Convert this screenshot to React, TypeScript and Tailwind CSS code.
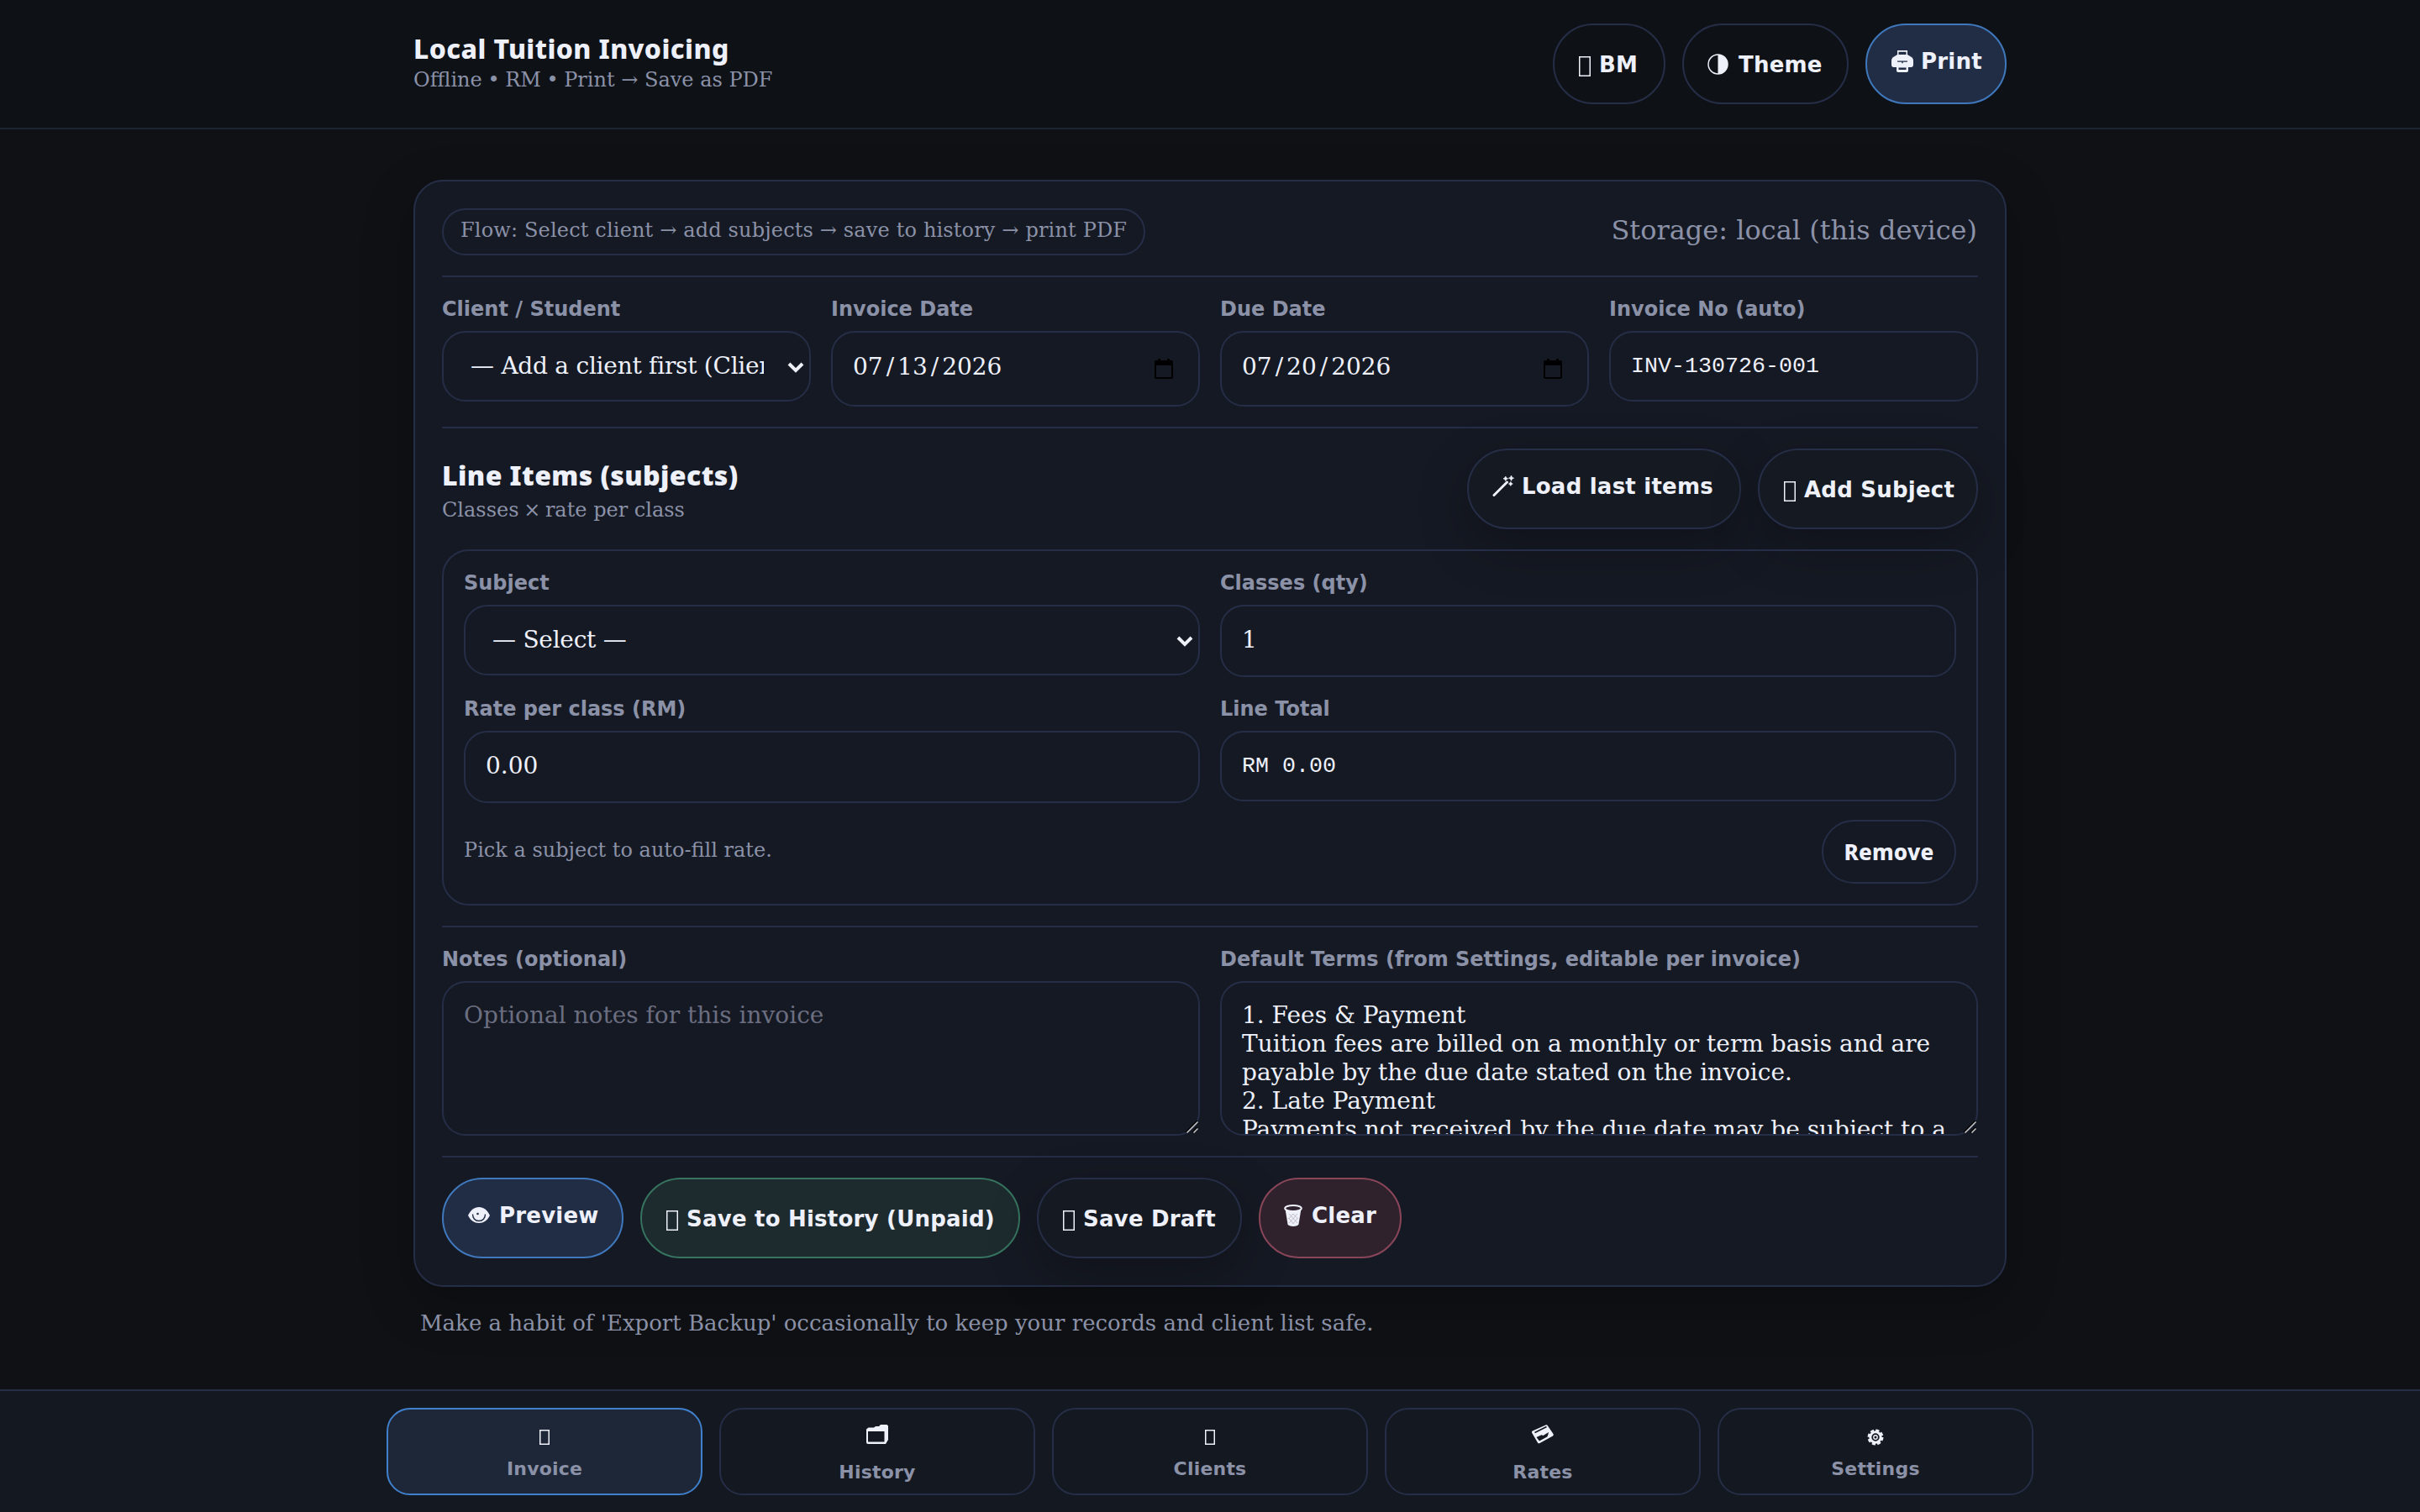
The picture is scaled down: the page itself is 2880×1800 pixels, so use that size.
import { useState } from "react";
import type { ReactNode } from "react";

const TERMS = `1. Fees & Payment
Tuition fees are billed on a monthly or term basis and are payable by the due date stated on the invoice.
2. Late Payment
Payments not received by the due date may be subject to a late fee.`;

const control =
  "block w-full rounded-[28px] border-2 border-[#262e47] bg-[#151923] px-6 text-[28px] text-[#eef0fa] outline-none";

const tones = {
  plain: "border-[#262e47]",
  shadow: "border-[#262e47] bg-[#151921] shadow-[0_20px_60px_rgba(0,0,0,0.25)]",
  primary: "border-[#4078be] bg-[#202d44]",
  good: "border-[#36745f] bg-[#1d2a2e]",
  danger: "border-[#8a4659] bg-[#2f222d]",
};

// Empty glyph box
function BoxIcon() {
  return (
    <svg className="mt-1.5 mr-[10px] ml-px h-6 w-[14px]" viewBox="0 0 14 24" fill="none" stroke="#eef0fa" strokeWidth="1.5">
      <path d="M.75.75h12.5v22.5H.75z" />
    </svg>
  );
}

function ThemeIcon() {
  return (
    <svg className="mr-3 h-[25px] w-[25px]" viewBox="0 0 25 25">
      <circle cx="12.5" cy="12.5" r="11.5" fill="none" stroke="#eef0fa" strokeWidth="1.5" />
      <path d="M12.5 1a11.5 11.5 0 0 1 0 23z" fill="#eef0fa" />
    </svg>
  );
}

function PrintIcon() {
  return (
    <svg className="mr-[9px] ml-px h-[26px] w-[26px]" viewBox="0 0 26 26" fill="#eef0fa">
      <path
        fillRule="evenodd"
        d="M7 0h12v5l4 2.500c2 1 3 2.500 3 5V17c0 2-1 3-2.500 3H20v4c0 1.300-.7 2-2 2H8c-1.300 0-2-.7-2-2v-4H2.500C1 20 0 19 0 17v-4.500c0-2.500 1-4 3-5L7 5zM8.500 1.800V5h9V1.800zM7 12.500v1.200h5.300v1.500h1.400v-1.500H19v-1.200zM8.500 20.500V23h9v-2.500z"
      />
    </svg>
  );
}

function WandIcon() {
  return (
    <svg className="mr-[9px] h-[25px] w-[26px]" viewBox="0 0 26 25" fill="#eef0fa">
      <path d="M2 23.500L17.500 8" stroke="#eef0fa" strokeWidth="3" strokeLinecap="round" />
      <path
        d="M15.800 1l1 1.800 1.800 1-1.800 1-1 1.800-1-1.800-1.800-1 1.800-1zM22.500 0l1 2.200 2.200 1-2.200 1-1 2.200-1-2.200-2.200-1 2.200-1zM21.800 7.500l.9 1.600 1.600.9-1.600.9-.9 1.600-.9-1.600-1.600-.9 1.600-.9z"
        stroke="#eef0fa"
        strokeWidth=".6"
      />
    </svg>
  );
}

function EyeIcon() {
  return (
    <svg className="mr-[11px] ml-px h-[19px] w-[26px]" viewBox="0 0 26 19">
      <path d="M0 10C3 3.500 7.500 0 13 0s10 3.500 13 10c-3 6-7.500 9-13 9S3 16 0 10z" fill="#eef0fa" />
      <path d="M5.500 8.500c0 4.500 2.800 8 7.500 8s7.500-3.500 7.500-8" fill="none" stroke="#202d44" strokeWidth="1.400" />
      <circle cx="11.500" cy="8" r="1.300" fill="#202d44" />
    </svg>
  );
}

function TrashIcon() {
  return (
    <svg className="mr-[11px] h-[26px] w-[22px]" viewBox="0 0 22 26">
      <path d="M1.500 5l3 18.500C5 25 8 26 11 26s6-1 6.500-2.500l3-18.500z" fill="#eef0fa" />
      <ellipse cx="11" cy="4.500" rx="9.800" ry="3.500" fill="#2f222d" stroke="#eef0fa" strokeWidth="2" />
      <path
        d="M6 11l10 11M11 11l5.500 6M5.500 16l6 7M16 11L6 22M11 11l-5.500 6M16.500 16l-6 7"
        stroke="#a89fa9"
        strokeWidth=".6"
      />
    </svg>
  );
}

type PillProps = { tone: keyof typeof tones; width: string; icon: ReactNode; label: string; raised?: boolean };

function PillButton({ tone, width, icon, label, raised }: PillProps) {
  return (
    <button
      className={`flex h-24 items-center rounded-full border-2 pl-7 font-['DejaVu_Sans'] text-[26px] font-bold tracking-[0.22px] whitespace-nowrap text-[#eef0fa] ${width} ${
        raised ? "pb-[7px]" : ""
      } ${tones[tone]}`}
    >
      {icon}
      <span className="pt-0.5">{label}</span>
    </button>
  );
}

function Field({ label, children }: { label: string; children: ReactNode }) {
  return (
    <label className="flex min-w-0 flex-col">
      <span className="h-10 font-['DejaVu_Sans'] text-[24px] leading-7 font-bold text-[#8b91a7]">{label}</span>
      {children}
    </label>
  );
}

function SelectBox({ option }: { option: string }) {
  return (
    <div className="relative">
      <select className={`${control} h-[84px] appearance-none pr-[54px] pl-8 tracking-[-0.25px]`}>
        <option>{option}</option>
      </select>
      <svg className="absolute top-9 right-2 h-4 w-5" viewBox="0 0 20 16" fill="none" stroke="#eef0fa" strokeWidth="4">
        <path d="M2 3l8 8 8-8" />
      </svg>
    </div>
  );
}

function DateBox({ value }: { value: string }) {
  const [month, day, year] = value.split("/");
  return (
    <div className={`${control} flex h-[90px] items-center justify-between pr-[30px]`}>
      <span className="pb-1">
        {month}
        <span className="mx-1">/</span>
        {day}
        <span className="mx-1">/</span>
        {year}
      </span>
      <svg className="h-6 w-[22px]" viewBox="0 0 22 24" fill="#000">
        <path d="M4 0h3v2h8V0h3v2h2a2 2 0 0 1 2 2v18a2 2 0 0 1-2 2H2a2 2 0 0 1-2-2V4a2 2 0 0 1 2-2h2zM2 8v14h18V8z" />
      </svg>
    </div>
  );
}

function MonoBox({ value }: { value: string }) {
  return (
    <input
      className={`${control} h-[84px] font-['Liberation_Mono'] text-[26.67px]!`}
      defaultValue={value}
      readOnly
    />
  );
}

function TextBox({ value, placeholder }: { value?: string; placeholder?: string }) {
  return (
    <div className="relative">
      <textarea
        className={`${control} h-[184px] resize-none overflow-hidden py-[22px] leading-[34px] placeholder:text-[#6b6e80]`}
        defaultValue={value}
        placeholder={placeholder}
      />
      <svg className="absolute right-0.5 bottom-[3px] h-4 w-4" viewBox="0 0 16 16">
        <path d="M1 15L15 1M9 15l6-6" stroke="#000" strokeWidth="1.500" />
        <path d="M2.500 15.500l13-13M10.500 15.500l5-5" stroke="#c8c8c8" strokeWidth="1.500" />
      </svg>
    </div>
  );
}

function Divider() {
  return <div className="my-6 h-0.5 bg-[#262e47]" />;
}

function SmallBox() {
  return (
    <svg className="h-[18px] w-3" viewBox="0 0 12 18" fill="none" stroke="#eef0fa" strokeWidth="1.500">
      <path d="M.75.75h10.500v16.500H.75z" />
    </svg>
  );
}

function FolderIcon() {
  return (
    <svg className="h-[23px] w-[26px]" viewBox="0 0 26 23">
      <path d="M0 7V5.500L2.500 3.500H9L11 2h4l2-2h7.500L26 1.500V18l-3 5H2a2 2 0 0 1-2-2z" fill="#eef0fa" />
      <path d="M2 8h19.500v12.500H2z" fill="#141820" />
    </svg>
  );
}

function CardIcon() {
  return (
    <svg className="h-[23px] w-[26px]" viewBox="0 0 26 23">
      <path
        d="M.8 7.500L16.500.5c1-.4 2 0 2.500 1l6.500 9.500c.5 1 .3 2-.5 2.500L9.500 22c-1 .6-2 .4-2.500-.5L.3 10c-.5-1-.5-2 .5-2.500z"
        fill="#eef0fa"
      />
      <path d="M3.500 9.500l14-7" stroke="#141820" strokeWidth="1.600" />
      <path d="M5.500 15l6-2.800 2 .8 6.500-4-.8 3.500-1 2L9 19.500z" fill="#141820" />
    </svg>
  );
}

function GearIcon() {
  return (
    <svg className="h-5 w-5" viewBox="0 0 20 20" fill="none" stroke="#eef0fa">
      <circle cx="10" cy="10" r="8.300" strokeWidth="2.400" strokeDasharray="4.200 2.319" />
      <circle cx="10" cy="10" r="6.200" strokeWidth="3" />
      <circle cx="10" cy="10" r="2.200" strokeWidth="1.400" />
    </svg>
  );
}

const tabs = [
  { icon: <SmallBox />, label: "Invoice" },
  { icon: <FolderIcon />, label: "History", tall: true },
  { icon: <SmallBox />, label: "Clients" },
  { icon: <CardIcon />, label: "Rates", tall: true },
  { icon: <GearIcon />, label: "Settings" },
];

export default function App() {
  const [active, setActive] = useState("Invoice");

  return (
    <div className="flex h-[1800px] w-[2880px] flex-col overflow-hidden bg-[#0f1115] font-['DejaVu_Serif'] text-[#eef0fa]">
      <header className="h-[154px] shrink-0 border-b-2 border-[#1c2333] bg-[#0e1217]">
        <div className="mx-auto flex h-full w-[1896px] items-center justify-between">
          <div>
            <h1 className="-mt-1 mb-1 font-['Noto_Sans'] text-[32px] leading-[38px] font-extrabold tracking-[0.4px]">
              Local Tuition Invoicing
            </h1>
            <p className="text-[24px] leading-7 text-[#8b91a7]">
              Offline <span className="-mx-px">•</span> RM <span className="-mx-px">•</span> Print → Save as PDF
            </p>
          </div>
          <div className="flex gap-5">
            <PillButton tone="plain" width="w-[134px]" icon={<BoxIcon />} label="BM" />
            <PillButton tone="plain" width="w-[198px]" icon={<ThemeIcon />} label="Theme" />
            <PillButton tone="primary" width="w-[168px]" icon={<PrintIcon />} label="Print" raised />
          </div>
        </div>
      </header>

      <main className="mx-auto w-[1896px] flex-1 pt-[60px]">
        <section className="rounded-[36px] border-2 border-[#262e47] bg-[#151923] p-8 shadow-[0_20px_60px_rgba(0,0,0,0.25)]">
          <div className="flex items-center justify-between">
            <div className="flex h-14 items-center rounded-full border-2 border-[#262e47] px-5 pb-1 text-[24px] tracking-[0.16px] text-[#8b91a7]">
              Flow: Select client → add subjects → save to history → print PDF
            </div>
            <span className="pr-px pb-[5px] text-[32px] text-[#8b91a7]">Storage: local (this device)</span>
          </div>

          <Divider />

          <div className="grid grid-cols-4 items-start gap-6">
            <Field label="Client / Student">
              <SelectBox option="— Add a client first (Clients tab) —" />
            </Field>
            <Field label="Invoice Date">
              <DateBox value="07/13/2026" />
            </Field>
            <Field label="Due Date">
              <DateBox value="07/20/2026" />
            </Field>
            <Field label="Invoice No (auto)">
              <MonoBox value="INV-130726-001" />
            </Field>
          </div>

          <Divider />

          <div className="flex items-center justify-between">
            <div className="pt-1">
              <h2 className="mb-2 font-['Noto_Sans'] text-[32px] leading-[38px] font-black tracking-[0.4px]">
                Line Items (subjects)
              </h2>
              <p className="text-[24px] leading-7 text-[#8b91a7]">
                Classes <span className="-mx-0.5">×</span> rate per class
              </p>
            </div>
            <div className="flex gap-5">
              <PillButton tone="shadow" width="w-[326px]" icon={<WandIcon />} label="Load last items" raised />
              <PillButton tone="shadow" width="w-[262px]" icon={<BoxIcon />} label="Add Subject" />
            </div>
          </div>

          <div className="relative mt-6 rounded-[32px] border-2 border-[#262e47] p-6">
            <div className="grid grid-cols-2 items-start gap-6">
              <Field label="Subject">
                <SelectBox option="— Select —" />
              </Field>
              <Field label="Classes (qty)">
                <input className={`${control} h-[86px] pb-1`} defaultValue="1" />
              </Field>
              <Field label="Rate per class (RM)">
                <input className={`${control} h-[86px] pb-1`} defaultValue="0.00" />
              </Field>
              <Field label="Line Total">
                <MonoBox value="RM 0.00" />
              </Field>
            </div>
            <div className="mt-5 flex items-center justify-between">
              <span className="pb-1 text-[24px] text-[#8b91a7]">Pick a subject to auto-fill rate.</span>
              <button className="h-[76px] w-40 rounded-full border-2 border-[#262e47] font-['Noto_Sans'] text-[26px] font-extrabold tracking-[0.2px]">
                Remove
              </button>
            </div>
          </div>

          <Divider />

          <div className="grid grid-cols-2 gap-6">
            <Field label="Notes (optional)">
              <TextBox placeholder="Optional notes for this invoice" />
            </Field>
            <Field label="Default Terms (from Settings, editable per invoice)">
              <TextBox value={TERMS} />
            </Field>
          </div>

          <Divider />

          <div className="flex gap-5">
            <PillButton tone="primary" width="w-[216px]" icon={<EyeIcon />} label="Preview" raised />
            <PillButton tone="good" width="w-[452px]" icon={<BoxIcon />} label="Save to History (Unpaid)" />
            <PillButton tone="shadow" width="w-[244px]" icon={<BoxIcon />} label="Save Draft" />
            <PillButton tone="danger" width="w-[170px]" icon={<TrashIcon />} label="Clear" raised />
          </div>
        </section>
        <p className="mt-[27px] px-2 text-[26px] leading-8 text-[#8b91a7]">
          Make a habit of 'Export Backup' occasionally to keep your records and client list safe.
        </p>
      </main>

      <nav className="h-[146px] shrink-0 border-t-2 border-[#262e47] bg-[#141820] pt-5">
        <div className="mx-auto grid w-[1960px] grid-cols-5 gap-5">
          {tabs.map((tab) => (
            <button
              key={tab.label}
              onClick={() => setActive(tab.label)}
              className={`flex h-[104px] flex-col items-center rounded-[28px] border-2 pt-4 font-['DejaVu_Sans'] font-bold ${
                active === tab.label ? "border-[#4080cc] bg-[#1d2738]" : "border-[#262e47]"
              }`}
            >
              <span className={`flex items-center ${tab.tall ? "mb-4 h-[27px]" : "mb-[5px] h-[34px]"}`}>{tab.icon}</span>
              <span className="text-[22px] leading-8 tracking-[0.2px] text-[#8b91a7]">{tab.label}</span>
            </button>
          ))}
        </div>
      </nav>
    </div>
  );
}
